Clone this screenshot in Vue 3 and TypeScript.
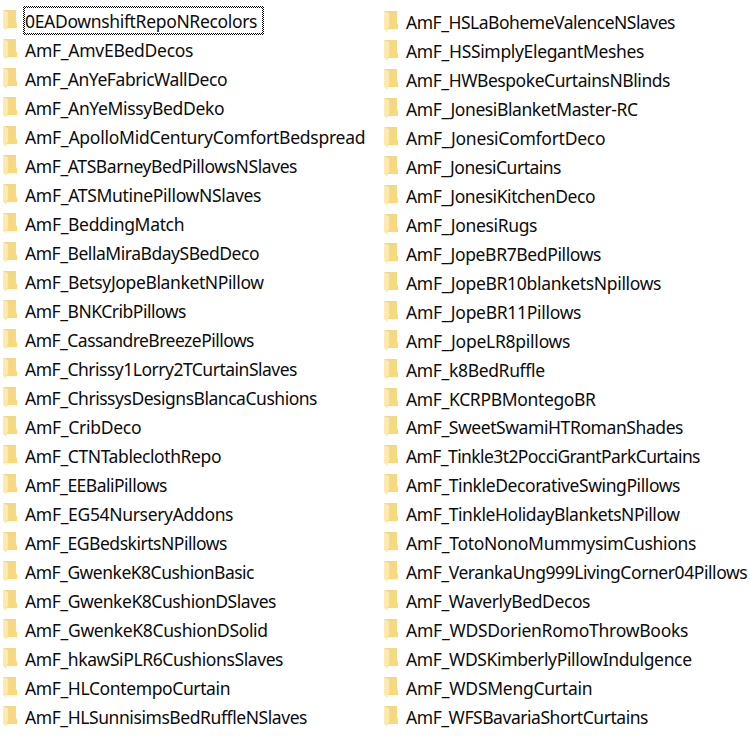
<script setup lang="ts">
import { onMounted, ref } from 'vue'

interface Folder {
  name: string
  width: number
  spacing: number
}

const FONT = '17.5px "Noto Sans"'

function folders(rows: [string, number][]): Folder[] {
  return rows.map(([name, width]) => ({ name, width, spacing: 0 }))
}

const columns = ref<Folder[][]>([
  folders([
    ['0EADownshiftRepoNRecolors', 232.5],
    ['AmF_AmvEBedDecos', 168.5],
    ['AmF_AnYeFabricWallDeco', 202.5],
    ['AmF_AnYeMissyBedDeko', 199.5],
    ['AmF_ApolloMidCenturyComfortBedspread', 340.5],
    ['AmF_ATSBarneyBedPillowsNSlaves', 272.5],
    ['AmF_ATSMutinePillowNSlaves', 236.5],
    ['AmF_BeddingMatch', 159.5],
    ['AmF_BellaMiraBdaySBedDeco', 234.5],
    ['AmF_BetsyJopeBlanketNPillow', 239],
    ['AmF_BNKCribPillows', 161.5],
    ['AmF_CassandreBreezePillows', 229.5],
    ['AmF_Chrissy1Lorry2TCurtainSlaves', 272.5],
    ['AmF_ChrissysDesignsBlancaCushions', 292.5],
    ['AmF_CribDeco', 116.5],
    ['AmF_CTNTableclothRepo', 196.5],
    ['AmF_EEBaliPillows', 142.5],
    ['AmF_EG54NurseryAddons', 208.5],
    ['AmF_EGBedskirtsNPillows', 202.5],
    ['AmF_GwenkeK8CushionBasic', 229.5],
    ['AmF_GwenkeK8CushionDSlaves', 251.5],
    ['AmF_GwenkeK8CushionDSolid', 243],
    ['AmF_hkawSiPLR6CushionsSlaves', 258.5],
    ['AmF_HLContempoCurtain', 205.5],
    ['AmF_HLSunnisimsBedRuffleNSlaves', 282.5],
  ]),
  folders([
    ['AmF_HSLaBohemeValenceNSlaves', 269.5],
    ['AmF_HSSimplyElegantMeshes', 238.5],
    ['AmF_HWBespokeCurtainsNBlinds', 264.5],
    ['AmF_JonesiBlanketMaster-RC', 232],
    ['AmF_JonesiComfortDeco', 199.5],
    ['AmF_JonesiCurtains', 155.5],
    ['AmF_JonesiKitchenDeco', 189.5],
    ['AmF_JonesiRugs', 131.5],
    ['AmF_JopeBR7BedPillows', 195.5],
    ['AmF_JopeBR10blanketsNpillows', 255.5],
    ['AmF_JopeBR11Pillows', 175.5],
    ['AmF_JopeLR8pillows', 164.5],
    ['AmF_k8BedRuffle', 139],
    ['AmF_KCRPBMontegoBR', 190],
    ['AmF_SweetSwamiHTRomanShades', 277.5],
    ['AmF_Tinkle3t2PocciGrantParkCurtains', 294.5],
    ['AmF_TinkleDecorativeSwingPillows', 274.5],
    ['AmF_TinkleHolidayBlanketsNPillow', 274],
    ['AmF_TotoNonoMummysimCushions', 290.5],
    ['AmF_VerankaUng999LivingCorner04Pillows', 341.7],
    ['AmF_WaverlyBedDecos', 184.5],
    ['AmF_WDSDorienRomoThrowBooks', 282.5],
    ['AmF_WDSKimberlyPillowIndulgence', 286],
    ['AmF_WDSMengCurtain', 186.5],
    ['AmF_WFSBavariaShortCurtains', 242.5],
  ]),
])

// Spread the difference between natural and wanted width over the letters.
onMounted(() => {
  const ctx = document.createElement('canvas').getContext('2d')
  if (!ctx) return
  ctx.font = FONT
  for (const column of columns.value) {
    for (const item of column) {
      item.spacing = (item.width - ctx.measureText(item.name).width) / (item.name.length - 1)
    }
  }
})
</script>

<template>
  <main class="explorer">
    <ul v-for="(column, c) in columns" :key="c" class="column">
      <li v-for="(item, i) in column" :key="item.name" class="row">
        <svg class="icon" viewBox="0 0 15 22" width="15" height="22" aria-hidden="true">
          <defs>
            <linearGradient :id="`back-${c}-${i}`" x1="0" y1="0" x2="1" y2="1">
              <stop offset="0" stop-color="#efd68e" />
              <stop offset="1" stop-color="#fbda76" />
            </linearGradient>
            <linearGradient :id="`flap-${c}-${i}`" x1="0" y1="0" x2="1" y2="1">
              <stop offset="0" stop-color="#fbebb8" />
              <stop offset="1" stop-color="#fee8a2" />
            </linearGradient>
          </defs>
          <path d="M0 1H13V13.5L14 14.5V19H0Z" :fill="`url(#back-${c}-${i})`" />
          <path d="M0 1L5.2 3.3V17L3.6 18.5V21.7L0 19Z" :fill="`url(#flap-${c}-${i})`" />
        </svg>
        <span class="label" :class="{ focused: c === 0 && i === 0 }">
          <span class="name" :style="{ letterSpacing: item.spacing + 'px' }">{{ item.name }}</span>
        </span>
      </li>
    </ul>
  </main>
</template>

<style>
body {
  margin: 0;
  background: #fff;
}
</style>

<style scoped>
.explorer {
  box-sizing: border-box;
  display: grid;
  grid-template-columns: 381px 369px;
  width: 750px;
  height: 750px;
  padding-top: 6px;
  overflow: hidden;
  background: #fff;
}

.column {
  margin: 0;
  padding: 0 0 0 3px;
  list-style: none;
}

.row {
  display: flex;
  align-items: flex-start;
  height: 29px;
}

.column:last-child .row:first-child {
  padding-top: 1px;
}

.column:last-child .row:nth-child(14) {
  height: 28px;
}

.icon {
  flex: none;
  margin: 3px 5px 0 0;
}

.label {
  box-sizing: border-box;
  flex: none;
  height: 29px;
  border: 2px solid transparent;
}

.label.focused {
  width: 241px;
  background:
    linear-gradient(#fff, #fff) padding-box,
    repeating-conic-gradient(#000 0 25%, #fff 0 50%) 0 0 / 2px 2px border-box;
}

.name {
  display: block;
  color: #0c0c0c;
  font: 17.5px/26px "Noto Sans", "Open Sans", sans-serif;
  font-variant-ligatures: none;
  white-space: nowrap;
}
</style>
